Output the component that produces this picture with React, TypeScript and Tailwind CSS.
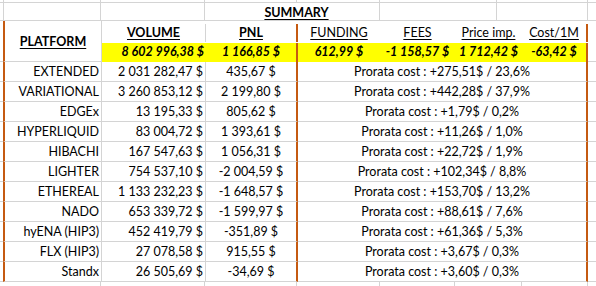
import React from 'react';

const grid = 'border-[#d4d4d4]';
const orange = 'border-[#c55a11]';

type Row = { name: string; volume: string; pnl: string; cost: string };

const rows: Row[] = [
  { name: 'EXTENDED', volume: '2 031 282,47 $', pnl: '435,67 $', cost: '+275,51$ / 23,6%' },
  { name: 'VARIATIONAL', volume: '3 260 853,12 $', pnl: '2 199,80 $', cost: '+442,28$ / 37,9%' },
  { name: 'EDGEx', volume: '13 195,33 $', pnl: '805,62 $', cost: '+1,79$ / 0,2%' },
  { name: 'HYPERLIQUID', volume: '83 004,72 $', pnl: '1 393,61 $', cost: '+11,26$ / 1,0%' },
  { name: 'HIBACHI', volume: '167 547,63 $', pnl: '1 056,31 $', cost: '+22,72$ / 1,9%' },
  { name: 'LIGHTER', volume: '754 537,10 $', pnl: '-2 004,59 $', cost: '+102,34$ / 8,8%' },
  { name: 'ETHEREAL', volume: '1 133 232,23 $', pnl: '-1 648,57 $', cost: '+153,70$ / 13,2%' },
  { name: 'NADO', volume: '653 339,72 $', pnl: '-1 599,97 $', cost: '+88,61$ / 7,6%' },
  { name: 'hyENA (HIP3)', volume: '452 419,79 $', pnl: '-351,89 $', cost: '+61,36$ / 5,3%' },
  { name: 'FLX (HIP3)', volume: '27 078,58 $', pnl: '915,55 $', cost: '+3,67$ / 0,3%' },
  { name: 'Standx', volume: '26 505,69 $', pnl: '-34,69 $', cost: '+3,60$ / 0,3%' },
];

const DataRow: React.FC<{ row: Row }> = ({ row }) => (
  <div className="flex h-[20px]">
    <div className={`w-[3px] border-b ${grid}`} />
    <div className={`w-[99px] flex items-center justify-end pr-[2px] pt-[1px] border-l-2 ${orange} border-r border-b border-r-[#d4d4d4] border-b-[#d4d4d4]`}>
      {row.name}
    </div>
    <div className={`w-[104px] flex items-center justify-end pr-[2px] pt-[1px] border-r border-b ${grid}`}>{row.volume}</div>
    <div className={`w-[92px] flex items-center justify-center pt-[1px] border-r-2 border-b ${orange} border-b-[#d4d4d4]`}>{row.pnl}</div>
    <div className={`w-[290px] flex items-center justify-center pt-[1px] border-r-2 border-b ${orange} border-b-[#d4d4d4]`}>
      Prorata cost : {row.cost}
    </div>
    <div className={`flex-1 border-b ${grid}`} />
  </div>
);

export default function App() {
  return (
    <div className="w-[596px] h-[286px] bg-white text-black flex flex-col overflow-hidden font-['Lato','Liberation_Sans',sans-serif] text-[12.5px] leading-none">
      {/* strip of the row above */}
      <div className="flex h-[3px]">
        {['w-[4px]', 'w-[97px]', 'w-[104px]', 'w-[92px]', 'w-[83px]', 'w-[117px]', 'w-[91px]'].map((w, i) => (
          <div key={i} className={`${w} border-r border-b ${grid}`} />
        ))}
        <div className={`flex-1 border-b ${grid}`} />
      </div>

      {/* title row */}
      <div className="flex h-[18px]">
        <div className={`w-[4px] border-r border-b ${grid}`} />
        <div className={`w-[97px] border-r border-b ${grid}`} />
        <div className={`w-[104px] border-r border-b ${grid}`} />
        <div className={`w-[175px] flex items-center justify-center pl-[9px] pt-[3px] border-r border-b ${grid}`}>
          <span className="font-bold underline underline-offset-2 decoration-1">SUMMARY</span>
        </div>
        <div className={`w-[117px] border-r border-b ${grid}`} />
        <div className={`w-[91px] border-r border-b ${grid}`} />
        <div className={`flex-1 border-b ${grid}`} />
      </div>

      {/* header + totals */}
      <div className="flex h-[41px]">
        <div className={`w-[3px] border-b ${grid}`} />
        <div className={`w-[99px] flex items-center justify-center pt-[2px] border-l-2 ${orange} border-r border-b border-r-[#d4d4d4] border-b-[#d4d4d4]`}>
          <span className="font-bold underline underline-offset-2 decoration-1">PLATFORM</span>
        </div>
        <div className="flex flex-col">
          <div className="flex h-[21px] pt-[3px]">
            <div className={`w-[104px] flex items-center justify-center border-r ${grid}`}>
              <span className="font-bold underline underline-offset-2 decoration-1">VOLUME</span>
            </div>
            <div className={`w-[92px] flex items-center justify-center border-r-2 ${orange}`}>
              <span className="font-bold underline underline-offset-2 decoration-1">PNL</span>
            </div>
            <div className={`w-[290px] flex border-r-2 ${orange}`}>
              {[
                ['w-[82px]', 'FUNDING'],
                ['w-[75px]', 'FEES'],
                ['w-[67px]', 'Price imp.'],
                ['flex-1', 'Cost/1M'],
              ].map(([w, t]) => (
                <div key={t} className={`${w} flex items-center justify-center`}>
                  <span className="underline underline-offset-2 decoration-1">{t}</span>
                </div>
              ))}
            </div>
          </div>
          <div className="flex h-[20px] pt-[1px] font-bold italic">
            <div className="w-[104px] flex items-center justify-end pr-[2px] bg-[#ffff00]">8 602 996,38 $</div>
            <div className={`w-[92px] flex items-center justify-center bg-[#ffff00] border-r-2 ${orange}`}>1 166,85 $</div>
            <div className={`w-[290px] flex bg-[#ffff00] border-r-2 ${orange}`}>
              {[
                ['w-[82px]', '612,99 $'],
                ['w-[75px]', '-1 158,57 $'],
                ['w-[67px]', '1 712,42 $'],
                ['flex-1', '-63,42 $'],
              ].map(([w, t]) => (
                <div key={t} className={`${w} flex items-center justify-center`}>{t}</div>
              ))}
            </div>
          </div>
        </div>
        <div className={`flex-1 border-b ${grid}`} />
      </div>

      {rows.map(r => (
        <DataRow key={r.name} row={r} />
      ))}

      {/* strip of the row below */}
      <div className="flex flex-1">
        {['w-[101px]', 'w-[104px]', 'w-[92px]', 'w-[83px]', 'w-[75px]', 'w-[67px]', 'w-[66px]'].map((w, i) => (
          <div key={i} className={`${w} border-r ${grid}`} />
        ))}
        <div className="flex-1" />
      </div>
    </div>
  );
}
